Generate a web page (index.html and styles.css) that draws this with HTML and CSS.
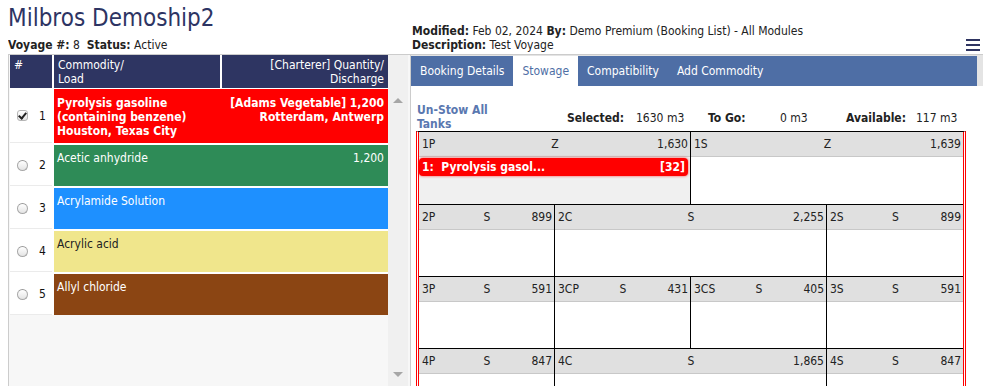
FILE: index.html
```html
<html lang="en">
<head>
    <meta charset="UTF-8">
    <meta name="viewport" content="width=device-width, initial-scale=1.0">
    <title>Milbros Demoship2 - Stowage</title>
    <link rel="stylesheet" href="styles.css">
</head>
<body>

    <div class="top">
        <div class="title-block">
            <h1 class="ship-name">Milbros Demoship2</h1>
            <div class="voyage"><b>Voyage #:</b> 8 &nbsp;<b>Status:</b> Active</div>
        </div>
        <div class="meta">
            <div class="meta-text">
                <div><b>Modified:</b> Feb 02, 2024 <b>By:</b> Demo Premium (Booking List) - All Modules</div>
                <div><b>Description:</b> Test Voyage</div>
            </div>
            <div class="menu-btn"><span></span><span></span><span></span></div>
        </div>
    </div>

    <div class="main">
        <div class="left-panel">
            <div class="list">
                <div class="list-head">
                    <div class="head-cell">#</div>
                    <div class="head-cell">Commodity/<br>Load</div>
                    <div class="head-cell right">[Charterer] Quantity/<br>Discharge</div>
                </div>
                <div class="rows">
                    <div class="row row-tall">
                        <div class="pick"><span class="checkbox checked"></span><span class="num">1</span></div>
                        <div class="commodity c-red bold">
                            <div>Pyrolysis gasoline<br>(containing benzene)<br>Houston, Texas City</div>
                            <div class="right">[Adams Vegetable] 1,200<br>Rotterdam, Antwerp</div>
                        </div>
                    </div>
                    <div class="row">
                        <div class="pick"><span class="radio"></span><span class="num">2</span></div>
                        <div class="commodity c-green">
                            <div>Acetic anhydride</div>
                            <div class="right">1,200</div>
                        </div>
                    </div>
                    <div class="row">
                        <div class="pick"><span class="radio"></span><span class="num">3</span></div>
                        <div class="commodity c-blue">
                            <div>Acrylamide Solution</div>
                        </div>
                    </div>
                    <div class="row">
                        <div class="pick"><span class="radio"></span><span class="num">4</span></div>
                        <div class="commodity c-khaki">
                            <div>Acrylic acid</div>
                        </div>
                    </div>
                    <div class="row">
                        <div class="pick"><span class="radio"></span><span class="num">5</span></div>
                        <div class="commodity c-brown">
                            <div>Allyl chloride</div>
                        </div>
                    </div>
                </div>
            </div>
            <div class="scroll">
                <span class="arrow-up"></span>
                <span class="arrow-down"></span>
            </div>
        </div>

        <div class="right-panel">
            <div class="tabs-wrap">
                <div class="tabs">
                    <div class="tab">Booking Details</div>
                    <div class="tab active">Stowage</div>
                    <div class="tab">Compatibility</div>
                    <div class="tab">Add Commodity</div>
                </div>
            </div>

            <div class="stow">
                <div class="stow-bar">
                    <div class="unstow-cell"><a class="unstow">Un-Stow All Tanks</a></div>
                    <div class="stat label w69">Selected:</div>
                    <div class="stat w72">1630 m3</div>
                    <div class="stat label w72">To Go:</div>
                    <div class="stat w66">0 m3</div>
                    <div class="stat label w70">Available:</div>
                    <div class="stat">117 m3</div>
                </div>

                <div class="tanks">
                    <div class="tank-row">
                        <div class="tank span2">
                            <div class="tank-head"><span>1P</span><span>Z</span><span class="cap">1,630</span></div>
                            <div class="tank-body filled">
                                <div class="stowed"><span>1:&nbsp; Pyrolysis gasol...</span><span>[32]</span></div>
                            </div>
                        </div>
                        <div class="tank span2">
                            <div class="tank-head"><span>1S</span><span>Z</span><span class="cap">1,639</span></div>
                            <div class="tank-body"></div>
                        </div>
                    </div>
                    <div class="tank-row">
                        <div class="tank">
                            <div class="tank-head"><span>2P</span><span>S</span><span class="cap">899</span></div>
                            <div class="tank-body"></div>
                        </div>
                        <div class="tank span2">
                            <div class="tank-head"><span>2C</span><span>S</span><span class="cap">2,255</span></div>
                            <div class="tank-body"></div>
                        </div>
                        <div class="tank">
                            <div class="tank-head"><span>2S</span><span>S</span><span class="cap">899</span></div>
                            <div class="tank-body"></div>
                        </div>
                    </div>
                    <div class="tank-row">
                        <div class="tank">
                            <div class="tank-head"><span>3P</span><span>S</span><span class="cap">591</span></div>
                            <div class="tank-body"></div>
                        </div>
                        <div class="tank">
                            <div class="tank-head"><span>3CP</span><span>S</span><span class="cap">431</span></div>
                            <div class="tank-body"></div>
                        </div>
                        <div class="tank">
                            <div class="tank-head"><span>3CS</span><span>S</span><span class="cap">405</span></div>
                            <div class="tank-body"></div>
                        </div>
                        <div class="tank">
                            <div class="tank-head"><span>3S</span><span>S</span><span class="cap">591</span></div>
                            <div class="tank-body"></div>
                        </div>
                    </div>
                    <div class="tank-row">
                        <div class="tank">
                            <div class="tank-head"><span>4P</span><span>S</span><span class="cap">847</span></div>
                            <div class="tank-body"></div>
                        </div>
                        <div class="tank span2">
                            <div class="tank-head"><span>4C</span><span>S</span><span class="cap">1,865</span></div>
                            <div class="tank-body"></div>
                        </div>
                        <div class="tank">
                            <div class="tank-head"><span>4S</span><span>S</span><span class="cap">847</span></div>
                            <div class="tank-body"></div>
                        </div>
                    </div>
                </div>
            </div>
        </div>
    </div>

</body>
</html>
```

FILE: styles.css
```css
body {
    font-family: Tahoma, "DejaVu Sans Condensed", "DejaVu Sans", sans-serif;
    font-size: 12px;
    color: #222;
    background-color: #fff;
    margin: 0 0 0 8px;
    overflow: hidden;
}
b, .bold {
    font-weight: bold;
}
.right {
    text-align: right;
}

/* header */
.top {
    display: flex;
    height: 54px;
}
.title-block {
    width: 404px;
}
.ship-name {
    margin: 0;
    height: 38px;
    font-size: 24px;
    font-weight: normal;
    line-height: 36px;
    color: #2d3463;
}
.voyage {
    line-height: 14px;
}
.meta {
    flex: 1;
    display: flex;
    justify-content: space-between;
    align-items: flex-end;
    padding-bottom: 2px;
    line-height: 14px;
}
.menu-btn {
    display: flex;
    flex-direction: column;
    gap: 3px;
    margin: 0 3px 1px 0;
}
.menu-btn span {
    display: block;
    width: 14px;
    height: 2px;
    background-color: #2e3461;
}

/* layout */
.main {
    display: flex;
    height: 332px;
}

/* booking list */
.left-panel {
    width: 400px;
    border-left: 1px solid #ccc;
    border-top: 1px solid #ccc;
    background-color: #f7f7f7;
    display: flex;
    padding-left: 1px;
}
.list {
    width: 378px;
}
.list-head {
    display: grid;
    grid-template-columns: 42px 166px 166px;
    column-gap: 2px;
    background-color: #fff;
    padding-bottom: 1px;
}
.head-cell {
    background-color: #2e3562;
    color: #fff;
    height: 33px;
    padding: 3px 4px 0 4px;
    line-height: 14px;
    box-sizing: border-box;
}
.rows {
    display: flex;
    flex-direction: column;
    gap: 2px;
    background-color: #fff;
}
.row {
    display: grid;
    grid-template-columns: 42px 334px;
    column-gap: 2px;
    height: 41px;
}
.row-tall {
    height: 54px;
}
.pick {
    display: flex;
    align-items: center;
    padding-left: 7px;
    border-bottom: 1px solid #ebebeb;
}
.num {
    margin-left: 11px;
    color: #111;
}
.checkbox, .radio {
    display: inline-block;
    width: 11px;
    height: 11px;
    box-sizing: border-box;
    border: 1px solid #b5b5b5;
    background: linear-gradient(#fff, #e4e4e4);
}
.radio {
    border-radius: 50%;
    border-color: #a8a8a8;
    border-top-color: #999;
}
.checkbox {
    border-radius: 3px;
    position: relative;
}
.checkbox.checked::after {
    content: "";
    position: absolute;
    left: 2px;
    top: 0;
    width: 3px;
    height: 6px;
    border: solid #222;
    border-width: 0 2px 2px 0;
    transform: rotate(40deg);
}
.commodity {
    display: flex;
    justify-content: space-between;
    padding: 6px 4px 0 3px;
    line-height: 14px;
    color: #fff;
}
.row-tall .commodity {
    padding-top: 7px;
}
.c-red { background-color: #ff0000; }
.c-green { background-color: #2e8b57; }
.c-blue { background-color: #1e90ff; }
.c-khaki { background-color: #f0e68c; color: #222; }
.c-brown { background-color: #8b4513; }

.scroll {
    width: 20px;
    background-color: #f0f0f0;
    display: flex;
    flex-direction: column;
    justify-content: space-between;
    align-items: center;
    padding: 43px 0 9px 0;
    box-sizing: border-box;
}
.arrow-up, .arrow-down {
    width: 0;
    height: 0;
    border-left: 5px solid transparent;
    border-right: 5px solid transparent;
}
.arrow-up {
    border-bottom: 5px solid #a6a6a6;
}
.arrow-down {
    border-top: 5px solid #a6a6a6;
}

/* stowage panel */
.right-panel {
    flex: 1;
    border-left: 1px solid #ccc;
    border-top: 1px solid #ccc;
}
.tabs-wrap {
    padding: 1px 6px 0 0;
    background-color: #e4e4e4;
}
.tabs {
    display: flex;
    height: 30px;
    background-color: #4e6ea5;
}
.tab {
    padding: 0 9px;
    line-height: 30px;
    color: #fff;
}
.tab.active {
    background-color: #fff;
    color: #4e6ea5;
}
.stow {
    padding: 15px 0 0 5px;
}
.stow-bar {
    display: flex;
    height: 30px;
    line-height: 14px;
}
.unstow-cell {
    width: 151px;
    padding: 2px 0 0 1px;
    box-sizing: border-box;
}
.unstow {
    display: block;
    width: 90px;
    font-weight: bold;
    color: #5a78b0;
    cursor: pointer;
}
.stat {
    padding-top: 10px;
}
.stat.label {
    font-weight: bold;
}
.w66 { width: 66px; }
.w69 { width: 69px; }
.w70 { width: 70px; }
.w72 { width: 72px; }

.tanks {
    width: 544px;
    border-top: 1px solid #000;
    border-left: 3px double #ff0000;
    border-right: 3px double #ff0000;
}
.tank-row {
    display: grid;
    grid-template-columns: repeat(4, 136px);
    border-bottom: 1px solid #000;
}
.tank {
    border-right: 1px solid #000;
}
.tank:last-child {
    border-right: none;
}
.span2 {
    grid-column: span 2;
}
.tank-head {
    display: grid;
    grid-template-columns: 1fr auto 1fr;
    height: 24px;
    line-height: 24px;
    padding: 0 2px 0 3px;
    background-color: #e0e0e0;
    border-bottom: 1px solid #c8c8c8;
}
.tank-head .cap {
    text-align: right;
}
.tank-body {
    height: 46px;
    background-color: #fff;
}
.tank-body.filled {
    background-color: #f0f0f0;
    padding-top: 1px;
}
.stowed {
    display: flex;
    justify-content: space-between;
    height: 18px;
    line-height: 18px;
    padding: 0 3px;
    background-color: #ff0000;
    border-radius: 4px;
    box-shadow: 0 0 3px rgba(255, 0, 0, 0.7);
    color: #fff;
    font-weight: bold;
    margin-right: 2px;
}
```
